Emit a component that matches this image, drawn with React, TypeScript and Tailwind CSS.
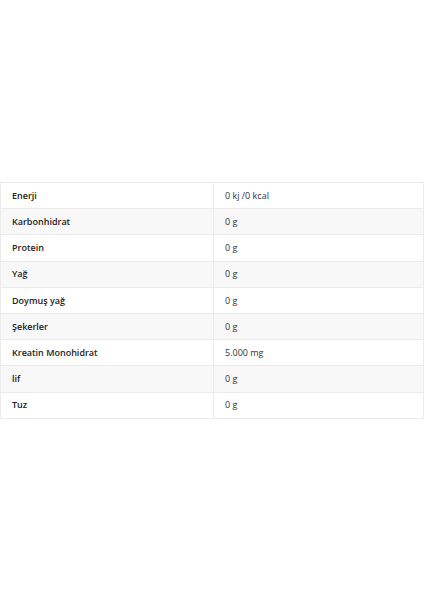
const rows: [string, string][] = [
  ["Enerji", "0 kj /0 kcal"],
  ["Karbonhidrat", "0 g"],
  ["Protein", "0 g"],
  ["Yağ", "0 g"],
  ["Doymuş yağ", "0 g"],
  ["Şekerler", "0 g"],
  ["Kreatin Monohidrat", "5.000 mg"],
  ["lif", "0 g"],
  ["Tuz", "0 g"],
];

export default function App() {
  return (
    <div className="w-[424px] h-[600px] bg-white pt-[182px]" style={{ fontFamily: '"Open Sans", sans-serif' }}>
      <table className="w-full border-collapse text-[9px] text-[#333]">
        <tbody>
          {rows.map(([label, value], i) => (
            <tr key={label} className={`h-[26.2px] ${i % 2 === 1 ? "bg-[#f8f8f8]" : "bg-white"}`}>
              <td className="w-[213px] border border-[#ebebeb] pl-[11px] font-semibold text-[#222]">{label}</td>
              <td className="border border-[#ebebeb] pl-[11px]">{value}</td>
            </tr>
          ))}
        </tbody>
      </table>
    </div>
  );
}
